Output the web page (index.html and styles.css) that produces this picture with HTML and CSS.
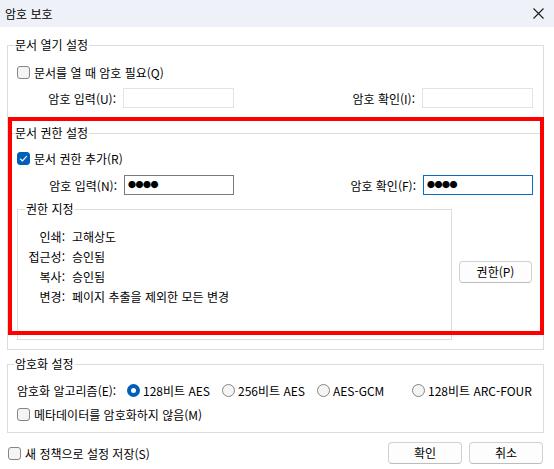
FILE: index.html
```html
<!DOCTYPE html>
<html lang="ko">
<head>
    <meta charset="UTF-8">
    <meta name="viewport" content="width=device-width, initial-scale=1.0">
    <title>암호 보호</title>
    <link rel="stylesheet" href="styles.css">
</head>
<body>

<div class="dialog">
    <div class="titlebar">
        <span class="title">암호 보호</span>
        <svg class="close" width="11" height="11" viewBox="0 0 11 11">
            <path d="M0.5 0.5 L10.5 10.5 M10.5 0.5 L0.5 10.5" stroke="#1b1b1b" stroke-width="1.1" fill="none"/>
        </svg>
    </div>

    <div class="content">
        <div class="group open-group">
            <div class="group-title">문서 열기 설정</div>
            <div class="check-row first-check">
                <span class="box"></span>
                <span>문서를 열 때 암호 필요(Q)</span>
            </div>
            <div class="pw-row open-pw">
                <span class="pw-label">암호 입력(U):</span>
                <span class="field disabled"></span>
                <span class="pw-label right">암호 확인(I):</span>
                <span class="field disabled"></span>
            </div>

            <div class="subgroup">
                <div class="group-title">문서 권한 설정</div>
                <div class="check-row perm-check">
                    <span class="box checked">
                        <svg width="9" height="9" viewBox="0 0 9 9"><path d="M1.2 4.8 L3.4 6.9 L7.8 2.2" stroke="#fff" stroke-width="1.2" fill="none"/></svg>
                    </span>
                    <span>문서 권한 추가(R)</span>
                </div>
                <div class="pw-row perm-pw">
                    <span class="pw-label">암호 입력(N):</span>
                    <span class="field filled">●●●●</span>
                    <span class="pw-label right">암호 확인(F):</span>
                    <span class="field filled focused">●●●●</span>
                </div>
                <div class="perm-area">
                    <div class="perm-box">
                        <div class="group-title">권한 지정</div>
                        <div class="perm-list">
                            <span class="perm-key">인쇄:</span><span>고해상도</span>
                            <span class="perm-key">접근성:</span><span>승인됨</span>
                            <span class="perm-key">복사:</span><span>승인됨</span>
                            <span class="perm-key">변경:</span><span>페이지 추출을 제외한 모든 변경</span>
                        </div>
                    </div>
                    <button class="btn perm-btn">권한(P)</button>
                </div>
            </div>
        </div>

        <div class="group crypt-group">
            <div class="group-title">암호화 설정</div>
            <div class="algo-row">
                <span class="algo-label">암호화 알고리즘(E):</span>
                <span class="option"><span class="radio on"></span>128비트 AES</span>
                <span class="option"><span class="radio"></span>256비트 AES</span>
                <span class="option"><span class="radio"></span>AES-GCM</span>
                <span class="option last"><span class="radio"></span>128비트 ARC-FOUR</span>
            </div>
            <div class="check-row meta-check">
                <span class="box"></span>
                <span>메타데이터를 암호화하지 않음(M)</span>
            </div>
        </div>

        <div class="footer">
            <div class="check-row save-check">
                <span class="box"></span>
                <span>새 정책으로 설정 저장(S)</span>
            </div>
            <div class="footer-buttons">
                <button class="btn">확인</button>
                <button class="btn">취소</button>
            </div>
        </div>
    </div>

    <div class="highlight"></div>
</div>

</body>
</html>
```

FILE: styles.css
```css
body {
    margin: 0;
    background-color: #ffffff;
    color: #000;
    font-family: "Noto Sans CJK KR", "Noto Sans", sans-serif;
    font-size: 12px;
}
.dialog {
    position: relative;
    width: 554px;
    height: 469px;
    overflow: hidden;
}
.titlebar {
    height: 27px;
    background-color: #eef2f8;
    display: flex;
    align-items: center;
    justify-content: space-between;
    padding: 0 10px 0 5px;
}
.title {
    line-height: 16px;
}
.content {
    padding: 0 10px 0 7px;
}
.group {
    border: 1px solid #dcdcdc;
}
.group-title {
    width: fit-content;
    margin: -9px 0 0 6px;
    padding: 0 1px;
    line-height: 16px;
    background-color: #fff;
}
.open-group {
    margin-top: 18px;
    padding-bottom: 9px;
}
.check-row {
    display: flex;
    align-items: center;
    height: 20px;
    gap: 4px;
}
.box {
    width: 11px;
    height: 11px;
    border: 1px solid #858585;
    border-radius: 3px;
    background-color: #f4f4f4;
    display: flex;
    align-items: center;
    justify-content: center;
}
.box.checked {
    background-color: #005fb8;
    border-color: #005fb8;
}
.first-check {
    margin-top: 9px;
    padding-left: 9px;
}
.pw-row {
    display: flex;
    align-items: center;
    height: 20px;
    padding-right: 10px;
}
.pw-label {
    width: 108px;
    text-align: right;
    margin-right: 7px;
    white-space: nowrap;
}
.pw-label.right {
    width: auto;
    margin-left: auto;
}
.field {
    box-sizing: border-box;
    width: 111px;
    height: 20px;
    border: 1px solid #e3e3e3;
    background-color: #fff;
}
.open-pw {
    margin-top: 6px;
}
.subgroup {
    margin-top: 25px;
    border-top: 1px solid #dcdcdc;
}
.perm-check {
    margin-top: 7px;
    padding-left: 9px;
}
.perm-pw {
    margin-top: 7px;
}
.perm-pw .pw-label {
    width: 109px;
}
.field.filled {
    width: 110px;
    border-color: #7a7a7a;
    font-size: 8px;
    line-height: 18px;
    padding-left: 3px;
    letter-spacing: -0.5px;
}
.field.focused {
    border-color: #0a6bc6;
}
.perm-area {
    display: flex;
    align-items: flex-start;
    margin-top: 14px;
    padding-left: 9px;
}
.perm-box {
    width: 433px;
    border: 1px solid #dcdcdc;
    padding-bottom: 33px;
}
.perm-box .group-title {
    margin-left: 7px;
}
.perm-list {
    display: grid;
    grid-template-columns: 47px auto;
    column-gap: 7px;
    grid-auto-rows: 20px;
    align-items: center;
    margin-top: 9px;
}
.perm-key {
    text-align: right;
    white-space: nowrap;
}
.btn {
    box-sizing: border-box;
    width: 74px;
    height: 22px;
    border: 1px solid #d1d1d1;
    border-bottom-color: #bdbdbd;
    border-radius: 4px;
    background-color: #fdfdfd;
    font-family: inherit;
    font-size: 12px;
    color: #000;
    padding: 0;
    line-height: 18px;
}
.perm-btn {
    width: 73px;
    margin: 52px 0 0 7px;
}
.crypt-group {
    margin-top: 14px;
    padding-bottom: 8px;
}
.algo-row {
    display: flex;
    align-items: center;
    height: 20px;
    margin-top: 8px;
    padding-left: 9px;
}
.algo-label {
    width: 110px;
    white-space: nowrap;
}
.option {
    display: flex;
    align-items: center;
    gap: 3px;
    width: 95px;
    white-space: nowrap;
}
.option.last {
    width: auto;
}
.radio {
    box-sizing: border-box;
    width: 13px;
    height: 13px;
    border: 1px solid #858585;
    border-radius: 50%;
    background-color: #f4f4f4;
}
.radio.on {
    border: 4px solid #005fb8;
    background-color: #fff;
}
.meta-check {
    margin-top: 4px;
    padding-left: 9px;
}
.footer {
    display: flex;
    align-items: center;
    justify-content: space-between;
    margin-top: 9px;
    padding-left: 1px;
}
.footer-buttons {
    display: flex;
    gap: 7px;
    margin-right: 1px;
}
.highlight {
    position: absolute;
    left: 8px;
    top: 117px;
    width: 528px;
    height: 210px;
    border: 4px solid #ff0000;
    pointer-events: none;
}
```
